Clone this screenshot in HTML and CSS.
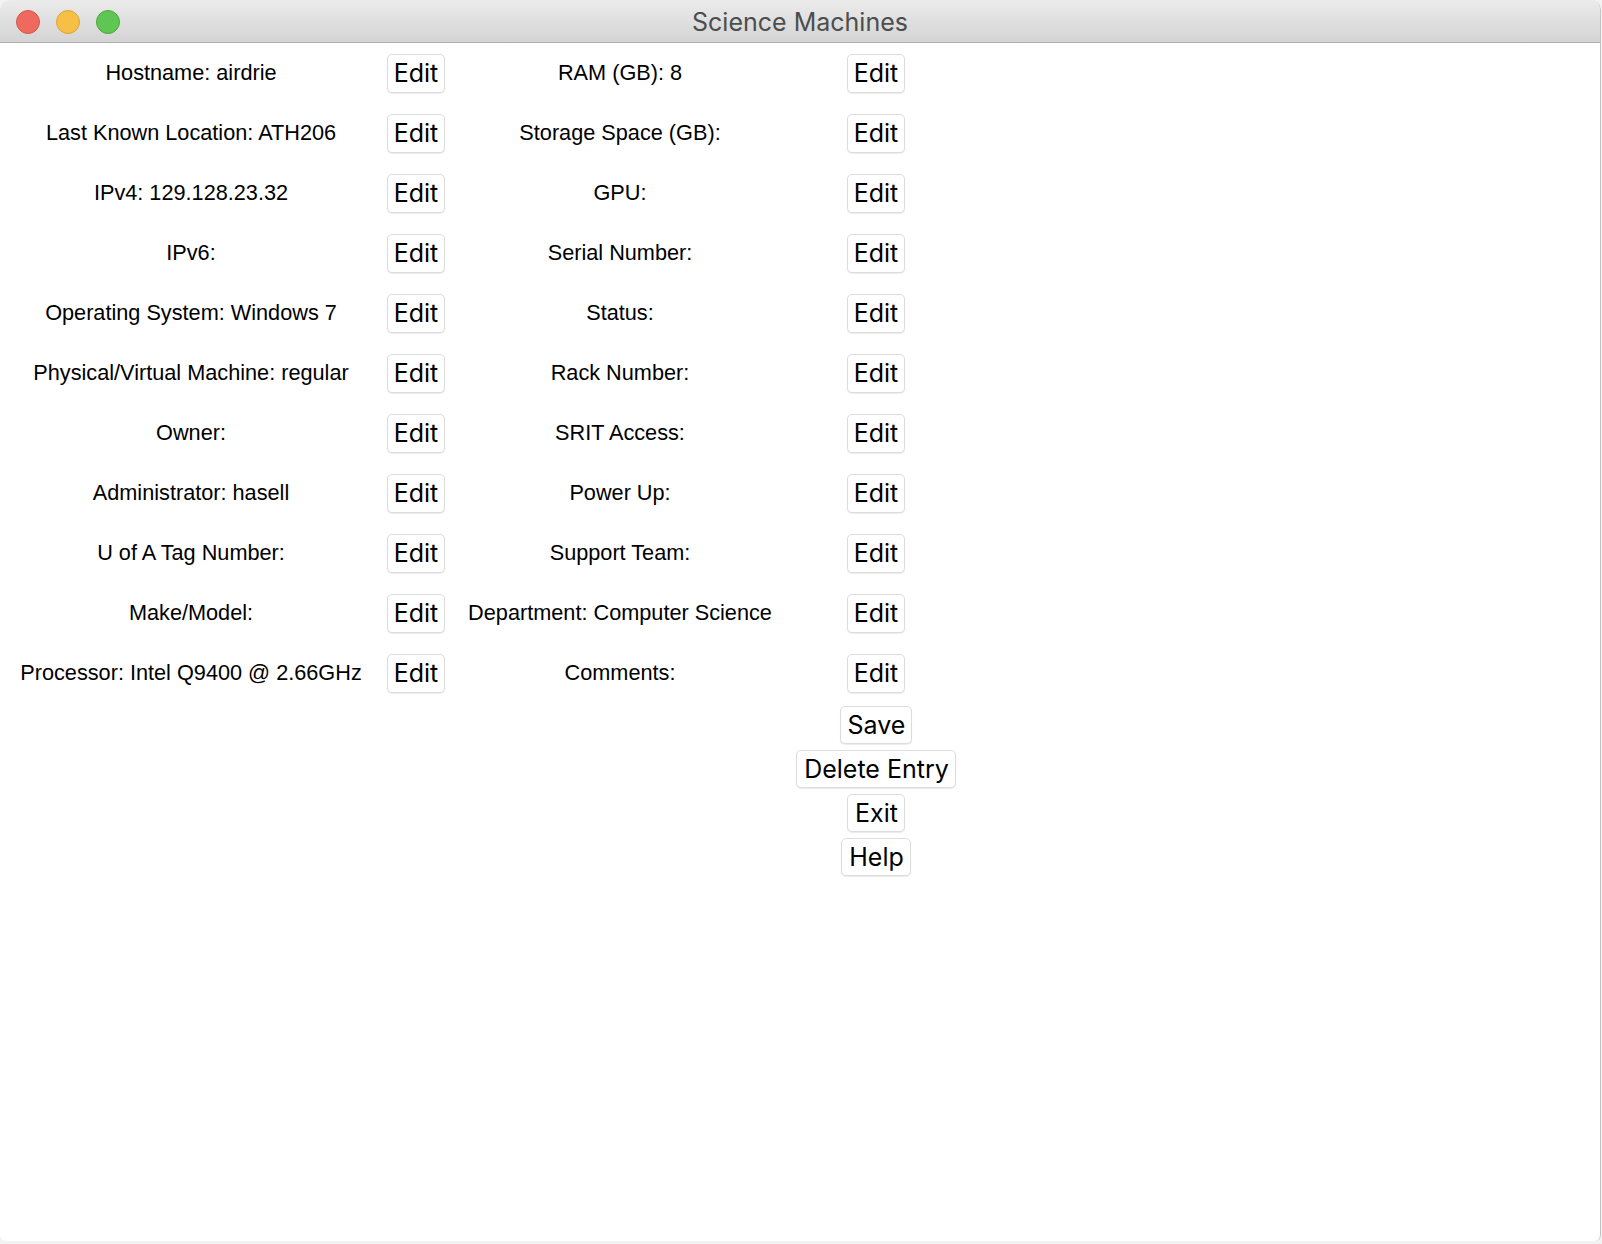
FILE: index.html
```html
<!DOCTYPE html>
<html>
<head>
<meta charset="utf-8">
<title>Science Machines</title>
<link rel="stylesheet" href="styles.css">
</head>
<body>
<div class="window">
  <div class="titlebar">
    <div class="lights">
      <span class="light red"></span>
      <span class="light yellow"></span>
      <span class="light green"></span>
    </div>
    <div class="title">Science Machines</div>
  </div>
  <div class="content">
    <div class="form">
      <div class="label">Hostname: airdrie</div><div class="cell"><button class="btn">Edit</button></div>
      <div class="label">RAM (GB): 8</div><div class="cell"><button class="btn">Edit</button></div>

      <div class="label">Last Known Location: ATH206</div><div class="cell"><button class="btn">Edit</button></div>
      <div class="label">Storage Space (GB):</div><div class="cell"><button class="btn">Edit</button></div>

      <div class="label">IPv4: 129.128.23.32</div><div class="cell"><button class="btn">Edit</button></div>
      <div class="label">GPU:</div><div class="cell"><button class="btn">Edit</button></div>

      <div class="label">IPv6:</div><div class="cell"><button class="btn">Edit</button></div>
      <div class="label">Serial Number:</div><div class="cell"><button class="btn">Edit</button></div>

      <div class="label">Operating System: Windows 7</div><div class="cell"><button class="btn">Edit</button></div>
      <div class="label">Status:</div><div class="cell"><button class="btn">Edit</button></div>

      <div class="label">Physical/Virtual Machine: regular</div><div class="cell"><button class="btn">Edit</button></div>
      <div class="label">Rack Number:</div><div class="cell"><button class="btn">Edit</button></div>

      <div class="label">Owner:</div><div class="cell"><button class="btn">Edit</button></div>
      <div class="label">SRIT Access:</div><div class="cell"><button class="btn">Edit</button></div>

      <div class="label">Administrator: hasell</div><div class="cell"><button class="btn">Edit</button></div>
      <div class="label">Power Up:</div><div class="cell"><button class="btn">Edit</button></div>

      <div class="label">U of A Tag Number:</div><div class="cell"><button class="btn">Edit</button></div>
      <div class="label">Support Team:</div><div class="cell"><button class="btn">Edit</button></div>

      <div class="label">Make/Model:</div><div class="cell"><button class="btn">Edit</button></div>
      <div class="label">Department: Computer Science</div><div class="cell"><button class="btn">Edit</button></div>

      <div class="label">Processor: Intel Q9400 @ 2.66GHz</div><div class="cell"><button class="btn">Edit</button></div>
      <div class="label">Comments:</div><div class="cell"><button class="btn">Edit</button></div>
    </div>
    <div class="actions">
      <div class="action-row"><button class="btn">Save</button></div>
      <div class="action-row"><button class="btn">Delete Entry</button></div>
      <div class="action-row"><button class="btn">Exit</button></div>
      <div class="action-row"><button class="btn">Help</button></div>
    </div>
  </div>
</div>
</body>
</html>
```
FILE: styles.css
```css
html, body {
  margin: 0;
  padding: 0;
}
body {
  background: #f2f2f2;
  width: 1602px;
  height: 1244px;
  overflow: hidden;
  position: relative;
}
.window {
  width: 1600px;
  height: 1241px;
  background: #ffffff;
  border-right: 1px solid #c4c4c4;
  border-radius: 10px 10px 6px 6px;
  overflow: hidden;
}
.titlebar {
  height: 42px;
  border-bottom: 1px solid #adadad;
  background: linear-gradient(#ebebeb, #d4d4d4);
  display: flex;
  align-items: center;
  position: relative;
}
.lights {
  display: flex;
  gap: 16px;
  padding-left: 16px;
  padding-top: 2px;
}
.light {
  width: 24px;
  height: 24px;
  border-radius: 50%;
  box-sizing: border-box;
}
.red { background: #ee6a5f; border: 1px solid #d7574c; }
.yellow { background: #f6c047; border: 1px solid #dca23a; }
.green { background: #5fc553; border: 1px solid #4aa83f; }
.title {
  position: absolute;
  left: 0;
  right: 0;
  top: 2px;
  bottom: 0;
  display: flex;
  align-items: center;
  justify-content: center;
  font-family: Inter, "Liberation Sans", sans-serif;
  font-size: 25px;
  color: #4d4d4d;
  pointer-events: none;
}
.content {
  padding-left: 12px;
}
.form {
  display: grid;
  grid-template-columns: 358px 92px 316px 196px;
  grid-auto-rows: 60px;
}
.label, .cell {
  display: flex;
  align-items: center;
  justify-content: center;
}
.label {
  font-family: "Liberation Sans", Arial, sans-serif;
  font-size: 21.7px;
  color: #000;
  white-space: nowrap;
}
.actions {
  display: grid;
  grid-template-columns: 196px;
  grid-auto-rows: 44px;
  margin-left: 766px;
}
.action-row {
  display: flex;
  align-items: center;
  justify-content: center;
}
.btn {
  font-family: Inter, "Liberation Sans", sans-serif;
  font-size: 25px;
  color: #000;
  background: #fff;
  border: 1px solid #dcdcdc;
  border-radius: 5px;
  box-shadow: 0 1px 1px rgba(0,0,0,0.08);
  height: 39px;
  padding: 0 6px;
  margin: 0;
  line-height: 37px;
}
.action-row .btn {
  height: 38px;
  padding: 0 6px 0 7px;
}
```
